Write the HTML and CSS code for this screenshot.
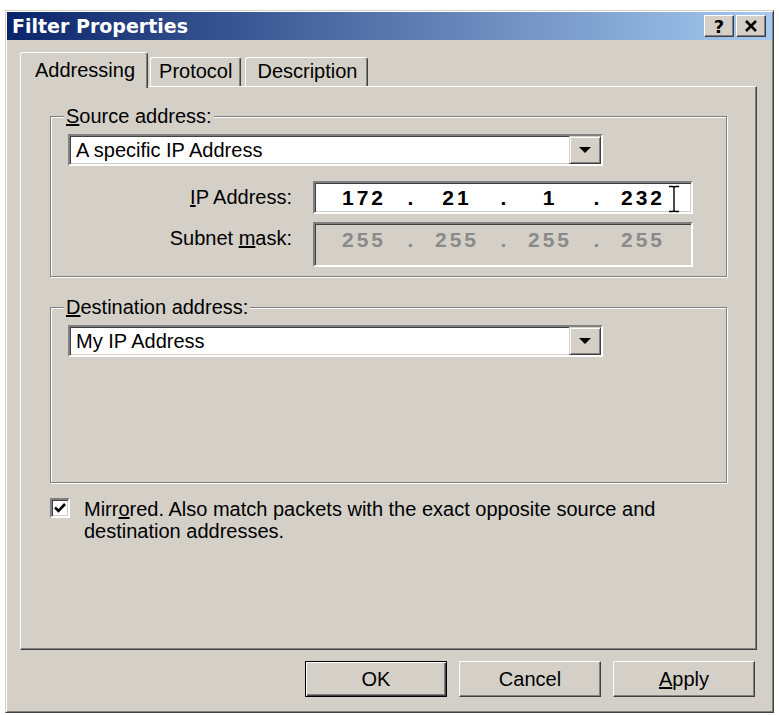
FILE: index.html
```html
<!DOCTYPE html>
<html lang="en">

<head>
    <meta charset="UTF-8">
    <title>Filter Properties</title>
    <link rel="stylesheet" href="styles.css">
</head>

<body>
    <div class="window">
        <!-- 标题栏 -->
        <div class="titlebar">
            <span class="title">Filter Properties</span>
            <div class="caption-btns">
                <a href="javascript:;" class="caption-btn help">?</a>
                <a href="javascript:;" class="caption-btn close">
                    <svg width="14" height="12" viewBox="0 0 14 12">
                        <path d="M2 1 L12 11 M12 1 L2 11" stroke="#000" stroke-width="2.6" fill="none" />
                    </svg>
                </a>
            </div>
        </div>

        <div class="dialog">
            <!-- 选项卡 -->
            <ul class="tabs">
                <li class="tab active">Addressing</li>
                <li class="tab">Protocol</li>
                <li class="tab last">Description</li>
            </ul>

            <div class="panel">
                <fieldset class="group source">
                    <legend><u>S</u>ource address:</legend>
                    <div class="combo">
                        <span class="combo-text">A specific IP Address</span>
                        <span class="combo-btn"><i class="arrow"></i></span>
                    </div>
                    <div class="ip-rows">
                        <label class="ip-label"><u>I</u>P Address:</label>
                        <div class="ipfield">
                            <span class="octet">172</span><span class="dot">.</span>
                            <span class="octet">21</span><span class="dot">.</span>
                            <span class="octet">1</span><span class="dot">.</span>
                            <span class="octet">232</span>
                            <svg class="ibeam" width="12" height="28" viewBox="0 0 12 28">
                                <path d="M1 1.5 H4.5 Q6 1.5 6 3 Q6 1.5 7.5 1.5 H11 M6 3 V25 M1 26.5 H4.5 Q6 26.5 6 25 Q6 26.5 7.5 26.5 H11" stroke="#000" stroke-width="1.4" fill="none" />
                            </svg>
                        </div>
                        <label class="ip-label">Subnet <u>m</u>ask:</label>
                        <div class="ipfield disabled">
                            <span class="octet">255</span><span class="dot">.</span>
                            <span class="octet">255</span><span class="dot">.</span>
                            <span class="octet">255</span><span class="dot">.</span>
                            <span class="octet">255</span>
                        </div>
                    </div>
                </fieldset>

                <fieldset class="group dest">
                    <legend><u>D</u>estination address:</legend>
                    <div class="combo">
                        <span class="combo-text">My IP Address</span>
                        <span class="combo-btn"><i class="arrow"></i></span>
                    </div>
                </fieldset>

                <div class="check-row">
                    <span class="checkbox">
                        <svg width="14" height="14" viewBox="0 0 14 14">
                            <path d="M2 6.5 L5.5 10 L12 3" stroke="#000" stroke-width="2.6" fill="none" />
                        </svg>
                    </span>
                    <p>Mirr<u>o</u>red. Also match packets with the exact opposite source and destination addresses.</p>
                </div>
            </div>

            <!-- 底部按钮 -->
            <div class="buttons">
                <a href="javascript:;" class="btn default">OK</a>
                <a href="javascript:;" class="btn">Cancel</a>
                <a href="javascript:;" class="btn"><u>A</u>pply</a>
            </div>
        </div>
    </div>
</body>

</html>
```

FILE: styles.css
```css
* {
    margin: 0;
    padding: 0;
    box-sizing: border-box;
}

ul,
li {
    list-style: none;
}

body {
    background: #fff;
    padding: 10px 0 0 5px;
    font-family: "Liberation Sans", Arial, sans-serif;
    font-size: 20px;
    color: #000;
}

a {
    color: #000;
    text-decoration: none;
}

.window {
    width: 769px;
    height: 703px;
    padding: 1px;
    background: #d4d0c8;
    border: 1px solid;
    border-color: #d4d0c8 #404040 #404040 #d4d0c8;
    box-shadow: inset 1px 1px #fff, inset -1px -1px #808080;
}

/* 标题栏 */
.titlebar {
    height: 28px;
    display: flex;
    align-items: center;
    justify-content: space-between;
    padding: 0 6px 0 5px;
    background: linear-gradient(to right, #0a246a, #a6caf0);
    color: #fff;
}

.title {
    font: bold 19px "DejaVu Sans", sans-serif;
}

.caption-btns {
    display: flex;
    gap: 2px;
}

.caption-btn {
    width: 30px;
    height: 22px;
    display: flex;
    align-items: center;
    justify-content: center;
    background: #d4d0c8;
    border: 1px solid;
    border-color: #fff #404040 #404040 #fff;
    box-shadow: inset -1px -1px #808080;
    font: bold 18px "DejaVu Sans", sans-serif;
}

.dialog {
    padding: 12px 15px 0 13px;
}

/* 选项卡 */
.tabs {
    display: flex;
    align-items: flex-end;
    height: 36px;
    margin-bottom: -2px;
    position: relative;
    z-index: 1;
}

.tab {
    height: 29px;
    margin-bottom: 2px;
    margin-left: 2px;
    padding: 0 8px;
    line-height: 27px;
    background: #d4d0c8;
    border-top: 1px solid #fff;
    border-left: 1px solid #fff;
    border-right: 1px solid #404040;
    border-radius: 3px 3px 0 0;
    box-shadow: inset -1px 0 #808080;
}

.tab.last {
    margin-left: 4px;
    padding: 0 10px 0 11px;
}

.tab.active {
    height: 36px;
    margin-bottom: 0;
    margin-left: 0;
    padding: 0 12px 0 14px;
    line-height: 34px;
}

.panel {
    height: 564px;
    padding: 18px 29px 0 29px;
    border: 1px solid;
    border-color: #fff #404040 #404040 #fff;
    box-shadow: inset -1px -1px #808080;
}

/* 分组框 */
.group {
    border: 1px solid #808080;
    box-shadow: 1px 1px 0 #fff, inset 1px 1px 0 #fff;
    padding: 7px 0 0 17px;
}

.group legend {
    margin-left: -4px;
    padding: 0 2px;
    line-height: 22px;
    background: #d4d0c8;
}

.source {
    padding-bottom: 9px;
}

.dest {
    height: 187px;
    margin-top: 19px;
}

/* 下拉框 */
.combo {
    width: 535px;
    height: 32px;
    display: flex;
    align-items: center;
    background: #fff;
    border: 2px solid;
    border-color: #808080 #fff #fff #808080;
    box-shadow: inset 1px 1px #404040, inset -1px -1px #d4d0c8;
}

.combo-text {
    flex: 1;
    padding-left: 6px;
}

.combo-btn {
    width: 32px;
    height: 100%;
    display: flex;
    align-items: center;
    justify-content: center;
    background: #d4d0c8;
    border: 1px solid;
    border-color: #d4d0c8 #404040 #404040 #d4d0c8;
    box-shadow: inset 1px 1px #fff, inset -1px -1px #808080;
}

.arrow {
    border-left: 6px solid transparent;
    border-right: 6px solid transparent;
    border-top: 6px solid #000;
}

/* IP 地址 */
.ip-rows {
    display: grid;
    grid-template-columns: 224px 380px;
    column-gap: 21px;
    row-gap: 8px;
    margin-top: 15px;
}

.ip-label {
    text-align: right;
    line-height: 33px;
}

.ip-label:nth-of-type(2) {
    line-height: 32px;
}

.ipfield {
    height: 33px;
    position: relative;
    display: flex;
    align-items: flex-start;
    padding: 1px 0 0 14px;
    background: #fff;
    border: 2px solid;
    border-color: #808080 #fff #fff #808080;
    box-shadow: inset 1px 1px #404040, inset -1px -1px #d4d0c8;
    font-weight: bold;
    font-size: 21px;
    line-height: 27px;
}

.ipfield.disabled {
    height: 45px;
    padding-top: 2px;
    background: #d4d0c8;
    color: #8a8a8a;
}

.octet {
    width: 70px;
    text-align: center;
    letter-spacing: 3px;
}

.dot {
    width: 23px;
    text-align: center;
}

.ibeam {
    position: absolute;
    left: 353px;
    top: 2px;
}

/* 复选框 */
.check-row {
    display: flex;
    align-items: flex-start;
    gap: 14px;
    margin-top: 15px;
}

.checkbox {
    width: 20px;
    height: 20px;
    flex-shrink: 0;
    display: flex;
    align-items: center;
    justify-content: center;
    background: #fff;
    border: 2px solid;
    border-color: #808080 #fff #fff #808080;
    box-shadow: inset 1px 1px #404040, inset -1px -1px #d4d0c8;
}

.check-row p {
    width: 600px;
    line-height: 22px;
}

/* 底部按钮 */
.buttons {
    display: flex;
    justify-content: flex-end;
    gap: 12px;
    margin-top: 11px;
    padding-right: 2px;
}

.btn {
    width: 142px;
    height: 36px;
    line-height: 34px;
    text-align: center;
    background: #d4d0c8;
    border: 1px solid;
    border-color: #fff #404040 #404040 #fff;
    box-shadow: inset -1px -1px #808080;
}

.btn.default {
    border-color: #000;
    box-shadow: inset 1px 1px #fff, inset -1px -1px #404040, inset -2px -2px #808080;
}
```
